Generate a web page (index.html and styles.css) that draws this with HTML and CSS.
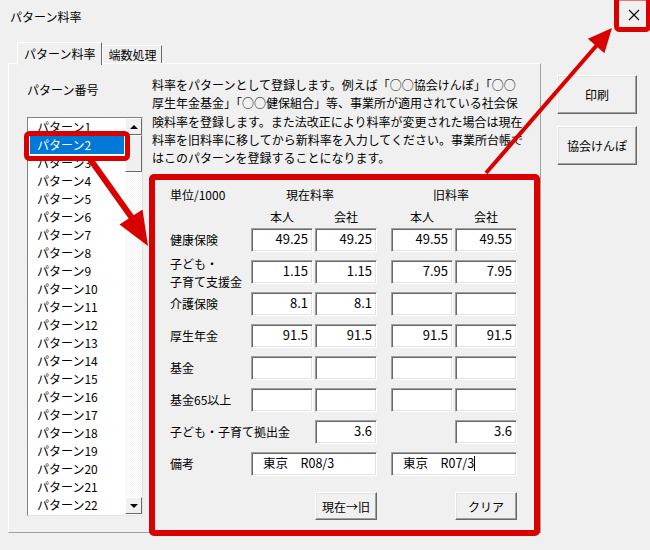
FILE: index.html
```html
<!DOCTYPE html>
<html lang="ja">
<head>
  <meta charset="UTF-8">
  <title>パターン料率</title>
  <link rel="stylesheet" href="styles.css">
</head>
<body>
  <div class="window">
    <div class="titlebar">
      <span class="title">パターン料率</span>
      <span class="close">
        <svg width="12" height="12" viewBox="0 0 12 12"><path d="M1 1L11 11M11 1L1 11" stroke="#000" stroke-width="1.1"/></svg>
      </span>
    </div>

    <div class="main">
      <div class="tabset">
        <div class="tabs">
          <div class="tab active">パターン料率</div>
          <div class="tab">端数処理</div>
        </div>
        <div class="panel">
          <div class="left">
            <div class="label">パターン番号</div>
            <div class="listbox">
              <ul class="items">
                <li>パターン1</li>
                <li class="selected">パターン2</li>
                <li>パターン3</li>
                <li>パターン4</li>
                <li>パターン5</li>
                <li>パターン6</li>
                <li>パターン7</li>
                <li>パターン8</li>
                <li>パターン9</li>
                <li>パターン10</li>
                <li>パターン11</li>
                <li>パターン12</li>
                <li>パターン13</li>
                <li>パターン14</li>
                <li>パターン15</li>
                <li>パターン16</li>
                <li>パターン17</li>
                <li>パターン18</li>
                <li>パターン19</li>
                <li>パターン20</li>
                <li>パターン21</li>
                <li>パターン22</li>
              </ul>
              <div class="scrollbar">
                <div class="sb-btn"><span class="tri up"></span></div>
                <div class="sb-thumb"></div>
                <div class="sb-track"></div>
                <div class="sb-btn"><span class="tri down"></span></div>
              </div>
            </div>
          </div>

          <div class="right">
            <p class="desc">料率をパターンとして登録します。例えば「○○協会けんぽ」「○○<br>厚生年金基金」「○○健保組合」等、事業所が適用されている社会保<br>険料率を登録します。また法改正により料率が変更された場合は現在<br>料率を旧料率に移してから新料率を入力してください。事業所台帳で<br>はこのパターンを登録することになります。</p>

            <div class="rates">
              <div class="rates-head">
                <div class="h-unit">単位/1000</div>
                <div class="h-now">現在料率</div>
                <div class="h-old">旧料率</div>
                <div class="c1 sub">本人</div>
                <div class="c2 sub">会社</div>
                <div class="c3 sub">本人</div>
                <div class="c4 sub">会社</div>
              </div>

              <div class="rates-grid">
                <div class="name">健康保険</div>
                <div class="field c1">49.25</div>
                <div class="field c2">49.25</div>
                <div class="field c3">49.55</div>
                <div class="field c4">49.55</div>

                <div class="name two">子ども・<br>子育て支援金</div>
                <div class="field c1">1.15</div>
                <div class="field c2">1.15</div>
                <div class="field c3">7.95</div>
                <div class="field c4">7.95</div>

                <div class="name">介護保険</div>
                <div class="field c1">8.1</div>
                <div class="field c2">8.1</div>
                <div class="field c3"></div>
                <div class="field c4"></div>

                <div class="name">厚生年金</div>
                <div class="field c1">91.5</div>
                <div class="field c2">91.5</div>
                <div class="field c3">91.5</div>
                <div class="field c4">91.5</div>

                <div class="name">基金</div>
                <div class="field c1"></div>
                <div class="field c2"></div>
                <div class="field c3"></div>
                <div class="field c4"></div>

                <div class="name">基金65以上</div>
                <div class="field c1"></div>
                <div class="field c2"></div>
                <div class="field c3"></div>
                <div class="field c4"></div>

                <div class="name wide">子ども・子育て拠出金</div>
                <div class="field c2">3.6</div>
                <div class="field c4">3.6</div>

                <div class="name">備考</div>
                <div class="field note now">東京　R08/3</div>
                <div class="field note old">東京　R07/3<span class="caret"></span></div>
              </div>

              <div class="rates-btns">
                <button class="btn c2">現在→旧</button>
                <button class="btn c4">クリア</button>
              </div>
            </div>
          </div>
        </div>
      </div>

      <div class="side">
        <button class="btn big">印刷</button>
        <button class="btn big">協会けんぽ</button>
      </div>
    </div>

    <!-- red annotations drawn over the dialog -->
    <svg class="notes" width="650" height="550" viewBox="0 0 650 550">
      <g fill="none" stroke="#d90000" stroke-width="5" stroke-linejoin="round">
        <rect x="616.5" y="-2" width="32" height="31.5" rx="3"/>
        <rect x="26.5" y="133.5" width="101" height="25" rx="3"/>
      </g>
      <g stroke="#d90000" stroke-linecap="butt">
        <line x1="90" y1="159" x2="132" y2="218" stroke-width="6"/>
        <line x1="486" y1="173" x2="597" y2="45" stroke-width="4"/>
      </g>
      <g fill="#d90000">
        <polygon points="148,246 119.5,224.4 142.5,209.6"/>
        <polygon points="612,28 604.4,53.3 587.9,38.7"/>
      </g>
    </svg>
  </div>
</body>
</html>
```

FILE: styles.css
```css
* { box-sizing: border-box; }
body { margin: 0; background: #f0f0f0; font-family: "Noto Sans CJK JP", "Noto Sans", sans-serif; font-size: 12px; color: #000; }
.window { position: relative; width: 650px; height: 550px; background: #f0f0f0; overflow: hidden; }

.titlebar { height: 32px; display: flex; align-items: center; justify-content: space-between; padding-left: 10px; }
.title { font-size: 12px; }
.close { width: 32px; height: 30px; display: flex; align-items: center; justify-content: center; margin-top: -2px; }

.main { display: flex; padding: 10px 0 0 8px; }
.tabset { width: 533px; }
.tabs { display: flex; align-items: flex-end; height: 21px; padding-left: 9px; position: relative; z-index: 1; }
.tab { height: 18px; line-height: 17px; padding: 0 5px; background: #f0f0f0; border: 1px solid #fff; border-right-color: #696969; border-bottom: none; }
.tab.active { height: 23px; margin-bottom: -2px; padding: 0 6px; line-height: 21px; border-right-color: #696969; }

.panel { position: relative; height: 470px; display: flex; border: 1px solid; border-color: #fff #a0a0a0 #a0a0a0 #fff; }

.left { padding: 18px 0 0 18px; width: 144px; }
.label { height: 16px; line-height: 16px; margin-bottom: 19px; }
.listbox { display: flex; width: 116px; height: 399px; background: #fff; border: 1px solid; border-color: #828282 #e3e3e3 #e3e3e3 #828282; }
.items { list-style: none; margin: 0; padding: 0; flex: 1; overflow: hidden; }
.items li { height: 18px; line-height: 18px; padding-left: 9px; white-space: nowrap; }
.items li.selected { background: #0078d7; color: #fff; margin: 0 1px 0 2px; padding-left: 7px; }
.scrollbar { width: 17px; display: flex; flex-direction: column; padding-bottom: 1px; }
.sb-btn { height: 17px; background: #f0f0f0; border: 1px solid; border-color: #fff #696969 #696969 #fff; display: flex; align-items: center; justify-content: center; }
.sb-thumb { height: 37px; background: #f0f0f0; border: 1px solid; border-color: #fff #696969 #696969 #fff; }
.sb-track { flex: 1; background: repeating-conic-gradient(#f4f4f4 0 25%, #ffffff 0 50%) 0 0 / 2px 2px; }
.tri { width: 0; height: 0; border-left: 4px solid transparent; border-right: 4px solid transparent; }
.tri.up { border-bottom: 4px solid #000; }
.tri.down { border-top: 4px solid #000; }

.right { padding: 12px 0 0 0; width: 388px; }
.desc { margin: 0; line-height: 18.3px; white-space: nowrap; font-size: 12px; }

.rates { margin: 7px 0 0 -3px; width: 391px; height: 362px; border: 6px solid #d90000; border-radius: 5px; padding: 6px 0 0 15px; }
.rates-head, .rates-grid, .rates-btns { display: grid; grid-template-columns: 79px 62px 62px 10px 62px 62px; column-gap: 2px; }
.rates-head { grid-template-rows: 20px 18px; row-gap: 2px; margin-bottom: 2px; line-height: 18px; }
.h-unit { grid-column: 1; grid-row: 1; }
.h-now { grid-column: 2 / 4; grid-row: 1; text-align: center; padding-right: 8px; }
.h-old { grid-column: 5 / 7; grid-row: 1; text-align: center; padding-right: 6px; }
.sub { grid-row: 2; text-align: center; }
.c1 { grid-column: 2; }
.c2 { grid-column: 3; }
.c3 { grid-column: 5; }
.c4 { grid-column: 6; }

.rates-grid { grid-template-rows: repeat(8, 24px); row-gap: 8px; }
.name { grid-column: 1; align-self: center; line-height: 18px; white-space: nowrap; }
.name.two { line-height: 17.5px; padding-top: 1px; }
.name.wide { grid-column: 1 / 3; }
.field { height: 24px; background: #fff; font-size: 13px; line-height: 20px; text-align: right; padding-right: 4px; border: 1px solid; border-color: #a0a0a0 #fff #fff #a0a0a0; box-shadow: inset 1px 1px #696969, inset -1px -1px #e3e3e3; white-space: nowrap; }
.field.note { text-align: left; padding-left: 11px; font-size: 12.5px; }
.field.now { grid-column: 2 / 4; }
.field.old { grid-column: 5 / 7; }
.caret { display: inline-block; width: 1px; height: 15px; background: #000; vertical-align: -3px; }

.rates-btns { margin-top: 16px; }
.btn { font-family: inherit; font-size: 12px; color: #000; background: #f0f0f0; border: 1px solid; border-color: #fff #696969 #696969 #fff; box-shadow: inset -1px -1px #a0a0a0, inset 1px 1px #e3e3e3; padding: 0; height: 28px; }

.side { display: flex; flex-direction: column; gap: 12px; padding: 33px 0 0 16px; }
.btn.big { width: 80px; height: 39px; }

.notes { position: absolute; top: 0; left: 0; pointer-events: none; }
```
